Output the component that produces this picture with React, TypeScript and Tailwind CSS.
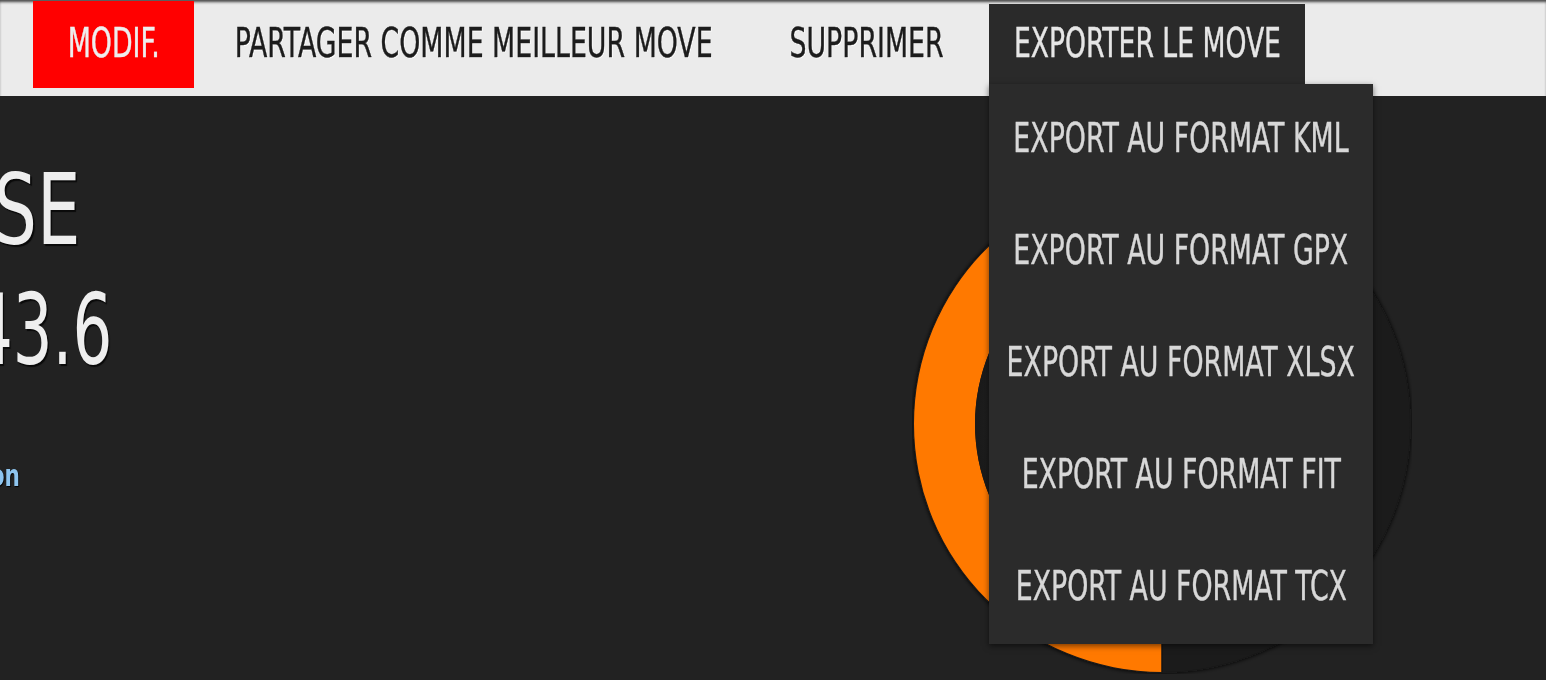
import React from "react";

const exportItems = ["KML", "GPX", "XLSX", "FIT", "TCX"];

function Donut() {
  return (
    <svg width="500" height="500" viewBox="0 0 500 500" className="mt-[78px] shrink-0">
      <defs>
        <filter id="soft" x="-10%" y="-10%" width="120%" height="120%">
          <feGaussianBlur stdDeviation="2" />
        </filter>
        <radialGradient id="hole" cx="50%" cy="50%" r="50%">
          <stop offset="88%" stopColor="#212121" />
          <stop offset="100%" stopColor="#1a1a1a" />
        </radialGradient>
      </defs>
      <circle cx="250" cy="250" r="249" fill="#0e0e0e" filter="url(#soft)" />
      <path d="M250 2 A248 248 0 0 0 250 498 L250 437 A187 187 0 0 1 250 63 Z" fill="#ff7900" />
      <path d="M250 2 A248 248 0 0 1 250 498 L250 437 A187 187 0 0 0 250 63 Z" fill="#1b1b1b" />
      <line x1="250" y1="437" x2="250" y2="498" stroke="#141414" strokeWidth="1.5" />
      <circle cx="250" cy="250" r="187" fill="url(#hole)" />
    </svg>
  );
}

export default function App() {
  return (
    <div className="relative w-[1546px] h-[680px] overflow-hidden bg-[#222222] font-['Liberation_Sans_Narrow','DejaVu_Sans_Condensed','Liberation_Sans',sans-serif]">
      <nav className="flex items-start h-[96px] bg-[#ebebeb] shadow-[inset_0_3px_3px_-1px_rgba(0,0,0,0.7)]">
        <a className="ml-[33px] mt-px w-[161px] h-[87px] pb-[3px] bg-[#ff0000] flex items-center justify-center">
          <span className="text-[40px] leading-none whitespace-nowrap text-[#eeeeee] scale-x-[0.745] [-webkit-text-stroke:0.4px_currentColor]">
            MODIF.
          </span>
        </a>
        <a className="ml-[7px] w-[545px] h-[85px] flex items-center justify-center">
          <span className="text-[40px] leading-none whitespace-nowrap text-[#1c1c1c] scale-x-[0.745] [-webkit-text-stroke:0.4px_currentColor] [text-shadow:1px_1px_0_#ffffff]">
            PARTAGER COMME MEILLEUR MOVE
          </span>
        </a>
        <a className="ml-[7px] w-[226px] h-[85px] flex items-center justify-center">
          <span className="text-[40px] leading-none whitespace-nowrap text-[#1c1c1c] scale-x-[0.745] [-webkit-text-stroke:0.4px_currentColor] [text-shadow:1px_1px_0_#ffffff]">
            SUPPRIMER
          </span>
        </a>
        <a className="ml-[10px] mt-[4px] w-[316px] h-[80px] pb-[3px] bg-[#2a2a2a] flex items-center justify-center">
          <span className="text-[40px] leading-none whitespace-nowrap text-[#e6e6e6] scale-x-[0.74] [-webkit-text-stroke:0.4px_currentColor]">
            EXPORTER LE MOVE
          </span>
        </a>
      </nav>

      <main className="flex">
        <div className="w-[912px] shrink-0 pt-[54px]">
          <div className="w-[80px] flex justify-end">
            <span className="text-[98px] leading-[120px] whitespace-nowrap text-[#eeeeee] origin-right scale-x-[0.78] [text-shadow:2px_2px_1px_#0a0a0a]">
              COURSE
            </span>
          </div>
          <div className="w-[112px] flex justify-end">
            <span className="text-[98px] leading-[120px] whitespace-nowrap text-[#eeeeee] origin-right scale-x-[0.71] [text-shadow:2px_2px_1px_#0a0a0a]">
              43.6
            </span>
          </div>
          <div className="w-[20px] mt-[71px] flex justify-end">
            <span className="text-[30px] leading-none font-bold whitespace-nowrap text-[#8ec5ef] origin-right scale-x-[0.8] [text-shadow:1px_1px_1px_#000000]">
              Session
            </span>
          </div>
        </div>
        <Donut />
      </main>

      <div className="absolute left-[989px] top-[84px] w-[384px] bg-[#2b2b2b] shadow-[0_2px_6px_rgba(0,0,0,0.55)] z-10">
        {exportItems.map((f) => (
          <a key={f} className="h-[112px] pb-[4px] flex items-center justify-center">
            <span className="text-[40px] leading-none whitespace-nowrap text-[#d8d8d8] scale-x-[0.745] [-webkit-text-stroke:0.4px_currentColor]">
              EXPORT AU FORMAT {f}
            </span>
          </a>
        ))}
      </div>
    </div>
  );
}
